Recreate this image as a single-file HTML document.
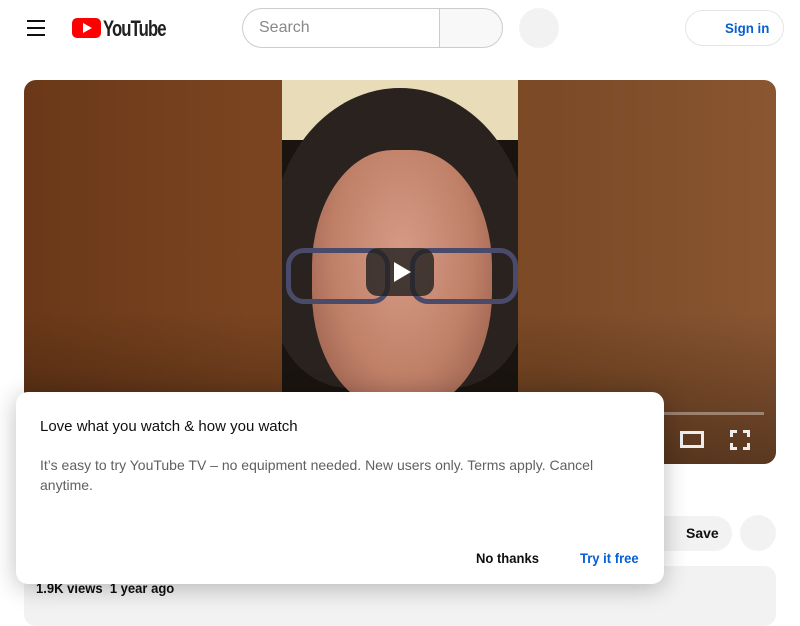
<!DOCTYPE html>
<html><head><style>
*{margin:0;padding:0;box-sizing:border-box}
body{width:800px;height:600px;overflow:hidden;background:#fff;font-family:"Liberation Sans",Arial,sans-serif;position:relative}
.abs{position:absolute}
</style></head><body>
<!-- header -->
<div class="abs" style="left:27px;top:20px;width:18px;height:2px;background:#0f0f0f"></div>
<div class="abs" style="left:27px;top:27px;width:18px;height:2px;background:#0f0f0f"></div>
<div class="abs" style="left:27px;top:34px;width:18px;height:2px;background:#0f0f0f"></div>
<div class="abs" style="left:72px;top:18px;width:29px;height:20px;background:#f00;border-radius:5px"></div>
<div class="abs" style="left:83px;top:23px;width:0;height:0;border-left:9px solid #fff;border-top:5px solid transparent;border-bottom:5px solid transparent"></div>
<div class="abs" style="left:103px;top:16px;font-size:22px;letter-spacing:-1.2px;color:#212121;transform:scaleX(0.76);transform-origin:left;font-weight:bold">YouTube</div>
<div class="abs" style="left:242px;top:8px;width:198px;height:40px;border:1px solid #ccc;border-radius:20px 0 0 20px;border-right:none"></div>
<div class="abs" style="left:259px;top:19px;font-size:16px;color:#888">Search</div>
<div class="abs" style="left:439px;top:8px;width:64px;height:40px;border:1px solid #ccc;border-radius:0 20px 20px 0;background:#f8f8f8"></div>
<div class="abs" style="left:519px;top:8px;width:40px;height:40px;border-radius:50%;background:#f2f2f2"></div>
<div class="abs" style="left:685px;top:10px;width:99px;height:36px;border:1px solid #e5e5e5;border-radius:18px"></div>
<div class="abs" style="left:725px;top:20px;font-size:14px;font-weight:bold;color:#065fd4;transform:scaleX(0.95);transform-origin:left">Sign in</div>
<!-- video -->
<div class="abs" style="left:24px;top:80px;width:752px;height:384px;border-radius:12px;overflow:hidden;background:linear-gradient(90deg,#6a3818 0%,#7a4420 30%,#7c4a26 70%,#8a5632 100%)">
 <div class="abs" style="left:0;top:0;width:752px;height:384px;background:linear-gradient(180deg,rgba(0,0,0,0) 60%,rgba(0,0,0,0.35) 100%)"></div>
 <div class="abs" style="left:258px;top:0;width:236px;height:384px;background:#1a1410;overflow:hidden">
  <div class="abs" style="left:0;top:0;width:236px;height:60px;background:#e9dcb8"></div>
  <div class="abs" style="left:-10px;top:8px;width:256px;height:300px;border-radius:50% 50% 30% 30%;background:#2a221e"></div>
  <div class="abs" style="left:30px;top:70px;width:180px;height:260px;border-radius:45% 45% 45% 45%;background:radial-gradient(ellipse at 50% 40%,#d69b86 0%,#c08068 55%,#8a5444 100%)"></div>
  <div class="abs" style="left:4px;top:168px;width:104px;height:56px;border:5px solid #4a4a6a;border-radius:18px"></div>
  <div class="abs" style="left:128px;top:168px;width:108px;height:56px;border:5px solid #4a4a6a;border-radius:18px"></div>
  <div class="abs" style="left:0;top:330px;width:236px;height:54px;background:#140f0c"></div>
 </div>
 <div class="abs" style="left:342px;top:168px;width:68px;height:48px;border-radius:12px;background:rgba(33,33,33,0.8)"></div>
 <div class="abs" style="left:370px;top:182px;width:0;height:0;border-left:17px solid #fff;border-top:10px solid transparent;border-bottom:10px solid transparent"></div>
 <div class="abs" style="left:620px;top:332px;width:120px;height:3px;background:rgba(255,255,255,0.35)"></div>
 <div class="abs" style="left:656px;top:351px;width:24px;height:17px;border:3px solid #eee"></div>
 <div class="abs" style="left:706px;top:350px;width:20px;height:20px;border:3px solid #eee;clip-path:polygon(0 0,35% 0,35% 100%,65% 100%,65% 0,100% 0,100% 35%,0 35%,0 65%,100% 65%,100% 100%,0 100%)"></div>
</div>
<!-- below -->
<div class="abs" style="left:640px;top:516px;width:92px;height:35px;border-radius:18px;background:#f2f2f2"></div>
<div class="abs" style="left:686px;top:525px;font-size:14px;font-weight:bold;color:#0f0f0f">Save</div>
<div class="abs" style="left:740px;top:515px;width:36px;height:36px;border-radius:50%;background:#f2f2f2"></div>
<div class="abs" style="left:24px;top:566px;width:752px;height:60px;border-radius:12px;background:#f2f2f2"></div>
<div class="abs" style="left:36px;top:580px;font-size:14px;font-weight:bold;color:#0f0f0f;transform:scaleX(0.93);transform-origin:left">1.9K views&nbsp; 1 year ago</div>
<!-- dialog -->
<div class="abs" style="left:16px;top:392px;width:648px;height:192px;background:#fff;border-radius:12px;box-shadow:0 4px 24px rgba(0,0,0,0.25)">
 <div class="abs" style="left:24px;top:26px;font-size:15px;color:#0f0f0f">Love what you watch &amp; how you watch</div>
 <div class="abs" style="left:24px;top:63px;width:580px;font-size:14px;line-height:20px;color:#606060">It’s easy to try YouTube TV – no equipment needed. New users only. Terms apply. Cancel anytime.</div>
 <div class="abs" style="left:460px;top:158px;font-size:14px;font-weight:bold;color:#0f0f0f;transform:scaleX(0.93);transform-origin:left">No thanks</div>
 <div class="abs" style="left:564px;top:158px;font-size:14px;font-weight:bold;color:#065fd4;transform:scaleX(0.93);transform-origin:left">Try it free</div>
</div>
</body></html>
